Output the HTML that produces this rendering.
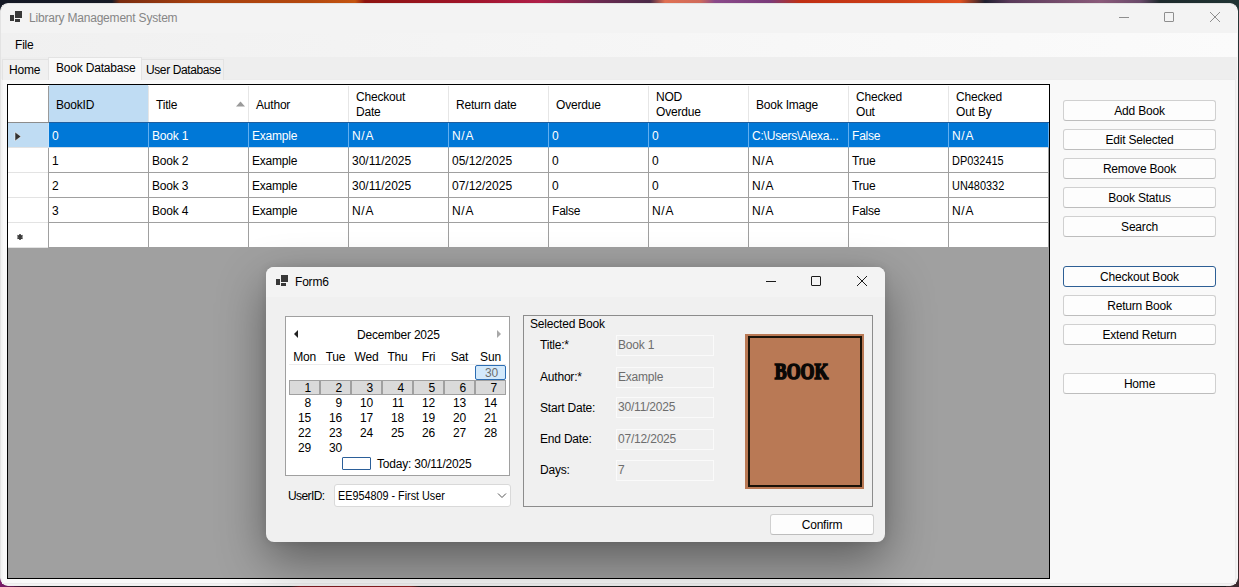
<!DOCTYPE html><html><head><meta charset="utf-8"><style>
*{box-sizing:border-box;margin:0;padding:0}
html,body{width:1239px;height:587px;overflow:hidden}
body{position:relative;font-family:"Liberation Sans",sans-serif;font-size:12px;letter-spacing:-0.2px;color:#000;
background:linear-gradient(90deg,#141824 0px,#161a26 112px,#7a2c10 120px,#a8400e 200px,#b4480e 310px,#c4540f 355px,#8e1410 365px,#a0142a 470px,#b01e48 540px,#6a2a50 600px,#4a2a48 650px,#e07052 665px,#d06a5a 700px,#8a4a8a 715px,#7a3a7a 770px,#c02e12 800px,#cc4018 900px,#e05020 960px,#202030 985px,#5a3a5a 1010px,#8a5a7a 1100px,#6a4a6a 1140px,#1e2a2c 1160px,#203434 1239px)}
.a{position:absolute}
.t{position:absolute;white-space:nowrap;line-height:14px}
.btn{position:absolute;background:#fdfdfd;border:1px solid #d0d0d0;border-bottom-color:#bdbdbd;border-radius:3px;text-align:center;line-height:19px;padding-top:1px;color:#000}
</style></head><body>
<div class="a" style="left:0;top:586px;width:1239px;height:1px;background:linear-gradient(90deg,#8a1a6a 0px,#3a1a30 20px,#1c1c1e 40px,#1c1c1e 290px,#7a1a20 300px,#8a2020 410px,#1c1c1e 420px,#1c1c1e 1239px)"></div>
<div class="a" style="left:1238px;top:0;width:1px;height:587px;background:linear-gradient(#203434,#4a2a30 300px,#3a2428)"></div>
<div class="a" style="left:0;top:572px;width:14px;height:15px;background:linear-gradient(90deg,#7a1a6a,#5a1a4a)"></div>
<div class="a" style="left:1226px;top:572px;width:13px;height:15px;background:#3a2a2e"></div>
<div class="a" style="left:0;top:0;width:1239px;height:587px;clip-path:inset(3px 1px 1px 0 round 8px)">
<div class="a" style="left:0;top:3px;width:1238px;height:583px;background:#f3f3f3;border-radius:8px;overflow:hidden;border:1px solid #e3e3e3;border-right-color:#f7f7f7;border-bottom-color:#f0f0f0"></div>
<div class="a" style="left:15px;top:11px;width:7px;height:7px;background:#383838"></div>
<div class="a" style="left:10px;top:15px;width:4px;height:6px;background:#383838"></div>
<div class="a" style="left:15px;top:19px;width:5px;height:3px;background:#383838"></div>
<div class="t" style="left:29px;top:11px;color:#868686">Library Management System</div>
<div class="a" style="left:1119px;top:17px;width:10px;height:1px;background:#8e8e8e"></div>
<div class="a" style="left:1164px;top:12px;width:10px;height:10px;border:1px solid #8e8e8e;border-radius:1px"></div>
<svg class="a" style="left:1209px;top:11px" width="12" height="12"><path d="M1 1L11 11M11 1L1 11" stroke="#8e8e8e" stroke-width="1"/></svg>
<div class="a" style="left:1px;top:33px;width:1236px;height:24px;background:linear-gradient(90deg,#f0f0f0,#fbfbfb)"></div>
<div class="t" style="left:15px;top:38px">File</div>
<div class="a" style="left:1px;top:57px;width:1236px;height:22px;background:#eeeeee"></div>
<div class="a" style="left:2px;top:79px;width:1234px;height:505px;background:#f9f9f9;border:1px solid #ececec;border-left-color:#f4f4f4"></div>
<div class="a" style="left:2px;top:59px;width:47px;height:21px;background:#f0f0f0;border:1px solid #e3e3e3;border-bottom:none"></div>
<div class="t" style="left:9px;top:63px">Home</div>
<div class="a" style="left:141px;top:59px;width:83px;height:21px;background:#f0f0f0;border:1px solid #e3e3e3;border-bottom:none"></div>
<div class="t" style="left:146px;top:63px;letter-spacing:-0.4px">User Database</div>
<div class="a" style="left:48px;top:57px;width:94px;height:23px;background:#f9f9f9;border:1px solid #e3e3e3;border-bottom:none"></div>
<div class="t" style="left:56px;top:61px">Book Database</div>
<div class="a" style="left:7px;top:84px;width:1043px;height:495px;background:#a0a0a0;border:1px solid #000"></div>
<div class="a" style="left:8px;top:85px;width:1041px;height:37px;background:#fff"></div>
<div class="a" style="left:49px;top:85px;width:99px;height:37px;background:#bfdcf3"></div>
<div class="a" style="left:8px;top:122px;width:41px;height:1px;background:#8c8c8c"></div>
<div class="a" style="left:49px;top:122px;width:1000px;height:1px;background:#1f5e9e"></div>
<div class="a" style="left:48px;top:86px;width:1px;height:36px;background:#9a9a9a"></div>
<div class="t" style="left:56px;top:98px">BookID</div>
<div class="a" style="left:148px;top:86px;width:1px;height:36px;background:#e6e6e6"></div>
<div class="t" style="left:156px;top:98px">Title</div>
<div class="a" style="left:248px;top:86px;width:1px;height:36px;background:#e6e6e6"></div>
<div class="t" style="left:256px;top:98px">Author</div>
<div class="a" style="left:348px;top:86px;width:1px;height:36px;background:#e6e6e6"></div>
<div class="t" style="left:356px;top:90px;line-height:15px">Checkout<br>Date</div>
<div class="a" style="left:448px;top:86px;width:1px;height:36px;background:#e6e6e6"></div>
<div class="t" style="left:456px;top:98px">Return date</div>
<div class="a" style="left:548px;top:86px;width:1px;height:36px;background:#e6e6e6"></div>
<div class="t" style="left:556px;top:98px">Overdue</div>
<div class="a" style="left:648px;top:86px;width:1px;height:36px;background:#e6e6e6"></div>
<div class="t" style="left:656px;top:90px;line-height:15px">NOD<br>Overdue</div>
<div class="a" style="left:748px;top:86px;width:1px;height:36px;background:#e6e6e6"></div>
<div class="t" style="left:756px;top:98px">Book Image</div>
<div class="a" style="left:848px;top:86px;width:1px;height:36px;background:#e6e6e6"></div>
<div class="t" style="left:856px;top:90px;line-height:15px">Checked<br>Out</div>
<div class="a" style="left:948px;top:86px;width:1px;height:36px;background:#e6e6e6"></div>
<div class="t" style="left:956px;top:90px;line-height:15px">Checked<br>Out By</div>
<svg class="a" style="left:235px;top:100px" width="12" height="8"><path d="M1 6.5L5.5 1.5L10 6.5Z" fill="#9a9a9a"/></svg>
<div class="a" style="left:8px;top:123px;width:40px;height:25px;background:#bfdcf3"></div>
<div class="a" style="left:49px;top:123px;width:1000px;height:24px;background:#0078d7"></div>
<div class="a" style="left:49px;top:147px;width:1000px;height:1px;background:#cfdbe6"></div>
<div class="a" style="left:8px;top:147px;width:40px;height:1px;background:#e3e3e3"></div>
<div class="a" style="left:148px;top:123px;width:1px;height:25px;background:#62aef0"></div>
<div class="t" style="left:52px;top:129px;letter-spacing:-0.2px;color:#fff">0</div>
<div class="a" style="left:248px;top:123px;width:1px;height:25px;background:#62aef0"></div>
<div class="t" style="left:152px;top:129px;letter-spacing:-0.2px;color:#fff">Book 1</div>
<div class="a" style="left:348px;top:123px;width:1px;height:25px;background:#62aef0"></div>
<div class="t" style="left:252px;top:129px;letter-spacing:-0.2px;color:#fff">Example</div>
<div class="a" style="left:448px;top:123px;width:1px;height:25px;background:#62aef0"></div>
<div class="t" style="left:352px;top:129px;letter-spacing:0.7px;color:#fff">N/A</div>
<div class="a" style="left:548px;top:123px;width:1px;height:25px;background:#62aef0"></div>
<div class="t" style="left:452px;top:129px;letter-spacing:0.7px;color:#fff">N/A</div>
<div class="a" style="left:648px;top:123px;width:1px;height:25px;background:#62aef0"></div>
<div class="t" style="left:552px;top:129px;letter-spacing:-0.2px;color:#fff">0</div>
<div class="a" style="left:748px;top:123px;width:1px;height:25px;background:#62aef0"></div>
<div class="t" style="left:652px;top:129px;letter-spacing:-0.2px;color:#fff">0</div>
<div class="a" style="left:848px;top:123px;width:1px;height:25px;background:#62aef0"></div>
<div class="t" style="left:752px;top:129px;letter-spacing:-0.2px;color:#fff">C:\Users\Alexa...</div>
<div class="a" style="left:948px;top:123px;width:1px;height:25px;background:#62aef0"></div>
<div class="t" style="left:852px;top:129px;letter-spacing:-0.2px;color:#fff">False</div>
<div class="a" style="left:1048px;top:123px;width:1px;height:25px;background:#62aef0"></div>
<div class="t" style="left:952px;top:129px;letter-spacing:0.7px;color:#fff">N/A</div>
<div class="a" style="left:48px;top:123px;width:1px;height:25px;background:#c6e2fa"></div>
<div class="a" style="left:8px;top:148px;width:40px;height:25px;background:#fff"></div>
<div class="a" style="left:49px;top:148px;width:1000px;height:24px;background:#fff"></div>
<div class="a" style="left:49px;top:172px;width:1000px;height:1px;background:#a0a0a0"></div>
<div class="a" style="left:8px;top:172px;width:40px;height:1px;background:#e3e3e3"></div>
<div class="a" style="left:148px;top:148px;width:1px;height:25px;background:#a0a0a0"></div>
<div class="t" style="left:52px;top:154px;letter-spacing:-0.2px;color:#000">1</div>
<div class="a" style="left:248px;top:148px;width:1px;height:25px;background:#a0a0a0"></div>
<div class="t" style="left:152px;top:154px;letter-spacing:-0.2px;color:#000">Book 2</div>
<div class="a" style="left:348px;top:148px;width:1px;height:25px;background:#a0a0a0"></div>
<div class="t" style="left:252px;top:154px;letter-spacing:-0.2px;color:#000">Example</div>
<div class="a" style="left:448px;top:148px;width:1px;height:25px;background:#a0a0a0"></div>
<div class="t" style="left:352px;top:154px;letter-spacing:0;color:#000">30/11/2025</div>
<div class="a" style="left:548px;top:148px;width:1px;height:25px;background:#a0a0a0"></div>
<div class="t" style="left:452px;top:154px;letter-spacing:0;color:#000">05/12/2025</div>
<div class="a" style="left:648px;top:148px;width:1px;height:25px;background:#a0a0a0"></div>
<div class="t" style="left:552px;top:154px;letter-spacing:-0.2px;color:#000">0</div>
<div class="a" style="left:748px;top:148px;width:1px;height:25px;background:#a0a0a0"></div>
<div class="t" style="left:652px;top:154px;letter-spacing:-0.2px;color:#000">0</div>
<div class="a" style="left:848px;top:148px;width:1px;height:25px;background:#a0a0a0"></div>
<div class="t" style="left:752px;top:154px;letter-spacing:0.7px;color:#000">N/A</div>
<div class="a" style="left:948px;top:148px;width:1px;height:25px;background:#a0a0a0"></div>
<div class="t" style="left:852px;top:154px;letter-spacing:-0.2px;color:#000">True</div>
<div class="a" style="left:1048px;top:148px;width:1px;height:25px;background:#a0a0a0"></div>
<div class="t" style="left:952px;top:154px;letter-spacing:0;transform:scaleX(0.91);transform-origin:0 0;color:#000">DP032415</div>
<div class="a" style="left:48px;top:148px;width:1px;height:25px;background:#a0a0a0"></div>
<div class="a" style="left:8px;top:173px;width:40px;height:25px;background:#fff"></div>
<div class="a" style="left:49px;top:173px;width:1000px;height:24px;background:#fff"></div>
<div class="a" style="left:49px;top:197px;width:1000px;height:1px;background:#a0a0a0"></div>
<div class="a" style="left:8px;top:197px;width:40px;height:1px;background:#e3e3e3"></div>
<div class="a" style="left:148px;top:173px;width:1px;height:25px;background:#a0a0a0"></div>
<div class="t" style="left:52px;top:179px;letter-spacing:-0.2px;color:#000">2</div>
<div class="a" style="left:248px;top:173px;width:1px;height:25px;background:#a0a0a0"></div>
<div class="t" style="left:152px;top:179px;letter-spacing:-0.2px;color:#000">Book 3</div>
<div class="a" style="left:348px;top:173px;width:1px;height:25px;background:#a0a0a0"></div>
<div class="t" style="left:252px;top:179px;letter-spacing:-0.2px;color:#000">Example</div>
<div class="a" style="left:448px;top:173px;width:1px;height:25px;background:#a0a0a0"></div>
<div class="t" style="left:352px;top:179px;letter-spacing:0;color:#000">30/11/2025</div>
<div class="a" style="left:548px;top:173px;width:1px;height:25px;background:#a0a0a0"></div>
<div class="t" style="left:452px;top:179px;letter-spacing:0;color:#000">07/12/2025</div>
<div class="a" style="left:648px;top:173px;width:1px;height:25px;background:#a0a0a0"></div>
<div class="t" style="left:552px;top:179px;letter-spacing:-0.2px;color:#000">0</div>
<div class="a" style="left:748px;top:173px;width:1px;height:25px;background:#a0a0a0"></div>
<div class="t" style="left:652px;top:179px;letter-spacing:-0.2px;color:#000">0</div>
<div class="a" style="left:848px;top:173px;width:1px;height:25px;background:#a0a0a0"></div>
<div class="t" style="left:752px;top:179px;letter-spacing:0.7px;color:#000">N/A</div>
<div class="a" style="left:948px;top:173px;width:1px;height:25px;background:#a0a0a0"></div>
<div class="t" style="left:852px;top:179px;letter-spacing:-0.2px;color:#000">True</div>
<div class="a" style="left:1048px;top:173px;width:1px;height:25px;background:#a0a0a0"></div>
<div class="t" style="left:952px;top:179px;letter-spacing:0;transform:scaleX(0.91);transform-origin:0 0;color:#000">UN480332</div>
<div class="a" style="left:48px;top:173px;width:1px;height:25px;background:#a0a0a0"></div>
<div class="a" style="left:8px;top:198px;width:40px;height:25px;background:#fff"></div>
<div class="a" style="left:49px;top:198px;width:1000px;height:24px;background:#fff"></div>
<div class="a" style="left:49px;top:222px;width:1000px;height:1px;background:#a0a0a0"></div>
<div class="a" style="left:8px;top:222px;width:40px;height:1px;background:#e3e3e3"></div>
<div class="a" style="left:148px;top:198px;width:1px;height:25px;background:#a0a0a0"></div>
<div class="t" style="left:52px;top:204px;letter-spacing:-0.2px;color:#000">3</div>
<div class="a" style="left:248px;top:198px;width:1px;height:25px;background:#a0a0a0"></div>
<div class="t" style="left:152px;top:204px;letter-spacing:-0.2px;color:#000">Book 4</div>
<div class="a" style="left:348px;top:198px;width:1px;height:25px;background:#a0a0a0"></div>
<div class="t" style="left:252px;top:204px;letter-spacing:-0.2px;color:#000">Example</div>
<div class="a" style="left:448px;top:198px;width:1px;height:25px;background:#a0a0a0"></div>
<div class="t" style="left:352px;top:204px;letter-spacing:0.7px;color:#000">N/A</div>
<div class="a" style="left:548px;top:198px;width:1px;height:25px;background:#a0a0a0"></div>
<div class="t" style="left:452px;top:204px;letter-spacing:0.7px;color:#000">N/A</div>
<div class="a" style="left:648px;top:198px;width:1px;height:25px;background:#a0a0a0"></div>
<div class="t" style="left:552px;top:204px;letter-spacing:-0.2px;color:#000">False</div>
<div class="a" style="left:748px;top:198px;width:1px;height:25px;background:#a0a0a0"></div>
<div class="t" style="left:652px;top:204px;letter-spacing:0.7px;color:#000">N/A</div>
<div class="a" style="left:848px;top:198px;width:1px;height:25px;background:#a0a0a0"></div>
<div class="t" style="left:752px;top:204px;letter-spacing:0.7px;color:#000">N/A</div>
<div class="a" style="left:948px;top:198px;width:1px;height:25px;background:#a0a0a0"></div>
<div class="t" style="left:852px;top:204px;letter-spacing:-0.2px;color:#000">False</div>
<div class="a" style="left:1048px;top:198px;width:1px;height:25px;background:#a0a0a0"></div>
<div class="t" style="left:952px;top:204px;letter-spacing:0.7px;color:#000">N/A</div>
<div class="a" style="left:48px;top:198px;width:1px;height:25px;background:#a0a0a0"></div>
<div class="a" style="left:8px;top:223px;width:40px;height:25px;background:#fff"></div>
<div class="a" style="left:49px;top:223px;width:1000px;height:24px;background:#fff"></div>
<div class="a" style="left:49px;top:247px;width:1000px;height:1px;background:#a0a0a0"></div>
<div class="a" style="left:8px;top:247px;width:40px;height:1px;background:#e3e3e3"></div>
<div class="a" style="left:148px;top:223px;width:1px;height:25px;background:#a0a0a0"></div>
<div class="a" style="left:248px;top:223px;width:1px;height:25px;background:#a0a0a0"></div>
<div class="a" style="left:348px;top:223px;width:1px;height:25px;background:#a0a0a0"></div>
<div class="a" style="left:448px;top:223px;width:1px;height:25px;background:#a0a0a0"></div>
<div class="a" style="left:548px;top:223px;width:1px;height:25px;background:#a0a0a0"></div>
<div class="a" style="left:648px;top:223px;width:1px;height:25px;background:#a0a0a0"></div>
<div class="a" style="left:748px;top:223px;width:1px;height:25px;background:#a0a0a0"></div>
<div class="a" style="left:848px;top:223px;width:1px;height:25px;background:#a0a0a0"></div>
<div class="a" style="left:948px;top:223px;width:1px;height:25px;background:#a0a0a0"></div>
<div class="a" style="left:1048px;top:223px;width:1px;height:25px;background:#a0a0a0"></div>
<div class="a" style="left:48px;top:223px;width:1px;height:25px;background:#a0a0a0"></div>
<svg class="a" style="left:14px;top:131px" width="8" height="11"><path d="M1 1L7 5.5L1 10Z" fill="#333" stroke="#fff" stroke-width="0.5"/></svg>
<svg class="a" style="left:16px;top:233px" width="8" height="8"><g stroke="#3a3a3a" stroke-width="1.6"><path d="M4 1V7M1.4 2.5L6.6 5.5M6.6 2.5L1.4 5.5"/></g></svg>
<div class="btn" style="left:1063px;top:100px;width:153px;height:21px;">Add Book</div>
<div class="btn" style="left:1063px;top:129px;width:153px;height:21px;">Edit Selected</div>
<div class="btn" style="left:1063px;top:158px;width:153px;height:21px;">Remove Book</div>
<div class="btn" style="left:1063px;top:187px;width:153px;height:21px;">Book Status</div>
<div class="btn" style="left:1063px;top:216px;width:153px;height:21px;">Search</div>
<div class="btn" style="left:1063px;top:266px;width:153px;height:21px;border-color:#2d5f95;">Checkout Book</div>
<div class="btn" style="left:1063px;top:295px;width:153px;height:21px;">Return Book</div>
<div class="btn" style="left:1063px;top:324px;width:153px;height:21px;">Extend Return</div>
<div class="btn" style="left:1063px;top:373px;width:153px;height:21px;">Home</div>
</div>
<div class="a" style="left:266px;top:267px;width:619px;height:275px;border-radius:8px;box-shadow:0 18px 48px rgba(0,0,0,0.42),0 0 8px rgba(0,0,0,0.10);background:#f0f0f0;overflow:hidden">
<div class="a" style="left:0;top:0;width:619px;height:30px;background:#f3f3f3"></div>
</div>
<div class="a" style="left:281px;top:275px;width:7px;height:7px;background:#383838"></div>
<div class="a" style="left:276px;top:279px;width:4px;height:6px;background:#383838"></div>
<div class="a" style="left:281px;top:283px;width:5px;height:3px;background:#383838"></div>
<div class="t" style="left:295px;top:275px">Form6</div>
<div class="a" style="left:766px;top:281px;width:10px;height:1px;background:#1a1a1a"></div>
<div class="a" style="left:811px;top:276px;width:10px;height:10px;border:1px solid #1a1a1a;border-radius:1px"></div>
<svg class="a" style="left:856px;top:275px" width="12" height="12"><path d="M1 1L11 11M11 1L1 11" stroke="#1a1a1a" stroke-width="1"/></svg>
<div class="a" style="left:285px;top:316px;width:225px;height:160px;background:#fff;border:1px solid #a0a0a0"></div>
<svg class="a" style="left:292px;top:329px" width="8" height="10"><path d="M6 1L2 5L6 9Z" fill="#222"/></svg>
<svg class="a" style="left:495px;top:329px" width="8" height="10"><path d="M2 1L6 5L2 9Z" fill="#a8a8a8"/></svg>
<div class="t" style="left:357px;top:328px">December 2025</div>
<div class="t" style="left:289px;top:350px;width:31px;text-align:center">Mon</div>
<div class="t" style="left:320px;top:350px;width:31px;text-align:center">Tue</div>
<div class="t" style="left:351px;top:350px;width:31px;text-align:center">Wed</div>
<div class="t" style="left:382px;top:350px;width:31px;text-align:center">Thu</div>
<div class="t" style="left:413px;top:350px;width:31px;text-align:center">Fri</div>
<div class="t" style="left:444px;top:350px;width:31px;text-align:center">Sat</div>
<div class="t" style="left:475px;top:350px;width:31px;text-align:center">Sun</div>
<div class="a" style="left:289px;top:364px;width:217px;height:1px;background:#ececec"></div>
<div class="a" style="left:475px;top:365px;width:31px;height:15px;background:#d3e9fb;border:1px solid #2c6db3;border-radius:2px"></div>
<div class="t" style="left:475px;top:366px;width:23px;text-align:right;color:#6d6d6d">30</div>
<div class="a" style="left:289px;top:380px;width:31px;height:15px;background:#dadada;border:1px solid #a0a0a0"></div>
<div class="t" style="left:289px;top:381px;width:22px;text-align:right">1</div>
<div class="a" style="left:320px;top:380px;width:31px;height:15px;background:#dadada;border:1px solid #a0a0a0"></div>
<div class="t" style="left:320px;top:381px;width:22px;text-align:right">2</div>
<div class="a" style="left:351px;top:380px;width:31px;height:15px;background:#dadada;border:1px solid #a0a0a0"></div>
<div class="t" style="left:351px;top:381px;width:22px;text-align:right">3</div>
<div class="a" style="left:382px;top:380px;width:31px;height:15px;background:#dadada;border:1px solid #a0a0a0"></div>
<div class="t" style="left:382px;top:381px;width:22px;text-align:right">4</div>
<div class="a" style="left:413px;top:380px;width:31px;height:15px;background:#dadada;border:1px solid #a0a0a0"></div>
<div class="t" style="left:413px;top:381px;width:22px;text-align:right">5</div>
<div class="a" style="left:444px;top:380px;width:31px;height:15px;background:#dadada;border:1px solid #a0a0a0"></div>
<div class="t" style="left:444px;top:381px;width:22px;text-align:right">6</div>
<div class="a" style="left:475px;top:380px;width:31px;height:15px;background:#dadada;border:1px solid #a0a0a0"></div>
<div class="t" style="left:475px;top:381px;width:22px;text-align:right">7</div>
<div class="t" style="left:289px;top:396px;width:22px;text-align:right">8</div>
<div class="t" style="left:320px;top:396px;width:22px;text-align:right">9</div>
<div class="t" style="left:351px;top:396px;width:22px;text-align:right">10</div>
<div class="t" style="left:382px;top:396px;width:22px;text-align:right">11</div>
<div class="t" style="left:413px;top:396px;width:22px;text-align:right">12</div>
<div class="t" style="left:444px;top:396px;width:22px;text-align:right">13</div>
<div class="t" style="left:475px;top:396px;width:22px;text-align:right">14</div>
<div class="t" style="left:289px;top:411px;width:22px;text-align:right">15</div>
<div class="t" style="left:320px;top:411px;width:22px;text-align:right">16</div>
<div class="t" style="left:351px;top:411px;width:22px;text-align:right">17</div>
<div class="t" style="left:382px;top:411px;width:22px;text-align:right">18</div>
<div class="t" style="left:413px;top:411px;width:22px;text-align:right">19</div>
<div class="t" style="left:444px;top:411px;width:22px;text-align:right">20</div>
<div class="t" style="left:475px;top:411px;width:22px;text-align:right">21</div>
<div class="t" style="left:289px;top:426px;width:22px;text-align:right">22</div>
<div class="t" style="left:320px;top:426px;width:22px;text-align:right">23</div>
<div class="t" style="left:351px;top:426px;width:22px;text-align:right">24</div>
<div class="t" style="left:382px;top:426px;width:22px;text-align:right">25</div>
<div class="t" style="left:413px;top:426px;width:22px;text-align:right">26</div>
<div class="t" style="left:444px;top:426px;width:22px;text-align:right">27</div>
<div class="t" style="left:475px;top:426px;width:22px;text-align:right">28</div>
<div class="t" style="left:289px;top:441px;width:22px;text-align:right">29</div>
<div class="t" style="left:320px;top:441px;width:22px;text-align:right">30</div>
<div class="a" style="left:342px;top:457px;width:29px;height:13px;border:1px solid #2b5f99;border-radius:1px"></div>
<div class="t" style="left:377px;top:457px">Today: 30/11/2025</div>
<div class="t" style="left:288px;top:489px;letter-spacing:-0.6px">UserID:</div>
<div class="a" style="left:334px;top:484px;width:177px;height:23px;background:#fff;border:1px solid #d9d9d9;border-radius:3px"></div>
<div class="t" style="left:338px;top:489px;letter-spacing:0;transform:scaleX(0.9);transform-origin:0 0">EE954809 - First User</div>
<svg class="a" style="left:497px;top:492px" width="10" height="7"><path d="M1 1.5L5 5.5L9 1.5" stroke="#555" fill="none" stroke-width="1"/></svg>
<div class="a" style="left:523px;top:315px;width:350px;height:192px;border:1px solid #8c8c8c"></div>
<div class="t" style="left:530px;top:317px">Selected Book</div>
<div class="t" style="left:540px;top:338px">Title:*</div>
<div class="t" style="left:540px;top:370px">Author:*</div>
<div class="t" style="left:540px;top:401px">Start Date:</div>
<div class="t" style="left:540px;top:432px">End Date:</div>
<div class="t" style="left:540px;top:463px">Days:</div>
<div class="a" style="left:616px;top:335px;width:98px;height:21px;border:1px solid #fafafa;background:#f0f0f0"></div>
<div class="t" style="left:618px;top:338px;color:#6d6d6d">Book 1</div>
<div class="a" style="left:616px;top:367px;width:98px;height:21px;border:1px solid #fafafa;background:#f0f0f0"></div>
<div class="t" style="left:618px;top:370px;color:#6d6d6d">Example</div>
<div class="a" style="left:616px;top:397px;width:98px;height:21px;border:1px solid #fafafa;background:#f0f0f0"></div>
<div class="t" style="left:618px;top:400px;color:#6d6d6d">30/11/2025</div>
<div class="a" style="left:616px;top:429px;width:98px;height:21px;border:1px solid #fafafa;background:#f0f0f0"></div>
<div class="t" style="left:618px;top:432px;color:#6d6d6d">07/12/2025</div>
<div class="a" style="left:616px;top:460px;width:98px;height:21px;border:1px solid #fafafa;background:#f0f0f0"></div>
<div class="t" style="left:618px;top:463px;color:#6d6d6d">7</div>
<div class="a" style="left:745px;top:334px;width:119px;height:155px;background:#b97955"></div>
<div class="a" style="left:748px;top:336px;width:114px;height:151px;border:2px solid #1a1208"></div>
<svg class="a" style="left:770px;top:358px" width="64" height="26"><text x="4.8" y="20.9" textLength="53.5" lengthAdjust="spacingAndGlyphs" font-family="Liberation Serif" font-weight="bold" font-size="22.7" fill="#0a0806" stroke="#0a0806" stroke-width="1.7" letter-spacing="0">BOOK</text></svg>
<div class="btn" style="left:770px;top:514px;width:104px;height:21px">Confirm</div>
</body></html>
